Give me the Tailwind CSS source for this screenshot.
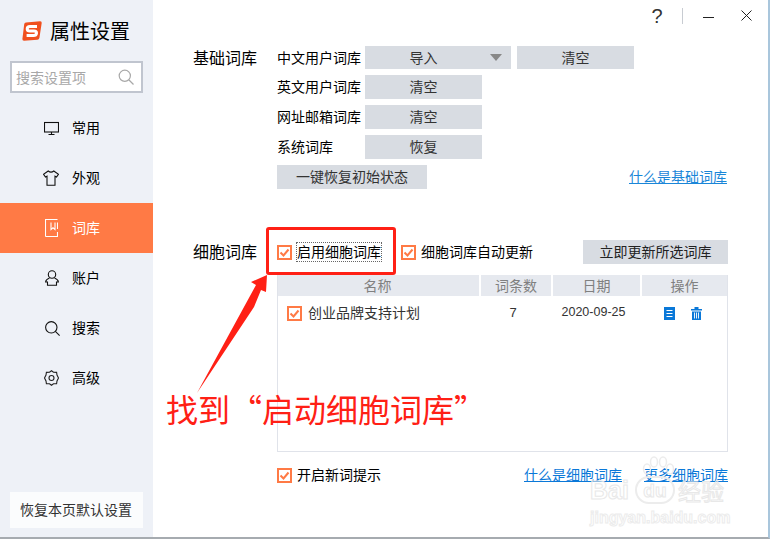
<!DOCTYPE html>
<html lang="zh-CN">
<head>
    <meta charset="UTF-8">
    <title>属性设置</title>
    <script src="https://cdn.jsdelivr.net/npm/@tailwindcss/browser@4"></script>
</head>
<body class="bg-white">
<div class="relative flex w-[770px] h-[539px] overflow-hidden bg-white border-r-2 border-b-2 border-r-[#a9c6dc] border-b-[#a6abb0] font-['Noto_Sans_CJK_SC','Liberation_Sans',sans-serif] text-sm text-black">

    <!-- sidebar -->
    <aside class="flex flex-col w-[153px] shrink-0 bg-[#eef1f7]">
        <div class="flex items-center gap-2 h-[61px] pl-[22px] pt-[1px]">
            <svg class="w-5 h-5 shrink-0" viewBox="0 0 20 20">
                <path d="M4 1.5 L18 .3 Q20 .2 19.7 2 L17.4 17 Q17 18.6 15.4 18.8 L2 19.8 Q.2 19.8 .4 18 L2.2 3.2 Q2.4 1.7 4 1.5Z" fill="#f0501e"/>
                <path d="M15 5.6 H8 Q5.2 5.6 5.2 8 Q5.2 10 8 10 H12 Q14.8 10 14.5 12.3 Q14.2 14.5 11.5 14.5 H4.6" fill="none" stroke="#fff" stroke-width="3"/>
            </svg>
            <span class="text-xl leading-none">属性设置</span>
        </div>
        <div class="flex items-center justify-between h-[32px] mx-[10px] pl-[4px] pr-[7px] bg-white border-[2px] border-[#c0c5cf]">
            <span class="text-sm text-[#a8a8a8]">搜索设置项</span>
            <svg class="w-4 h-4" viewBox="0 0 16 16" fill="none" stroke="#a8a8a8" stroke-width="1.2"><circle cx="6.8" cy="6.8" r="5.6"/><path d="M11 11l4.5 4.5"/></svg>
        </div>
        <nav class="flex flex-col mt-[10px]">
            <div class="flex items-center h-[50px] pl-[44px] gap-[13px]">
                <svg class="w-[15px] h-[15px]" viewBox="0 0 15 15" fill="none" stroke="#111" stroke-width="1.1"><rect x=".5" y="1.5" width="14" height="9.5"/><path d="M7.5 11v2.5M4.5 13.5h6"/></svg>
                <span class="pb-[2px]">常用</span>
            </div>
            <div class="flex items-center h-[50px] pl-[43px] gap-[13px]">
                <svg class="w-4 h-4" viewBox="0 0 16 16" fill="none" stroke="#111" stroke-width="1.1"><path d="M5.2 1 Q8 3.2 10.8 1 L15.5 4.2 L13.5 7 L12 6.2 V15.3 H4 V6.2 L2.5 7 L.5 4.2Z"/></svg>
                <span class="pb-[2px]">外观</span>
            </div>
            <div class="flex items-center h-[50px] pl-[45px] gap-[14px] bg-[#ff7a45] text-white">
                <svg class="w-[13px] h-[18px]" viewBox="0 0 13 18" fill="none" stroke="#fff" stroke-width="1.1"><path d="M.5 17.5V.5H12.5M.5 17.5H12.5V13M12.5 3.5V10"/><path d="M6 3.5V10.5L8 8.8 10 10.5V3.5"/></svg>
                <span class="pb-[2px]">词库</span>
            </div>
            <div class="flex items-center h-[50px] pl-[45px] gap-[13px]">
                <svg class="w-[14px] h-4" viewBox="0 0 14 16" fill="none" stroke="#111" stroke-width="1.1"><circle cx="7" cy="4.5" r="3.7"/><path d="M4.5 8 Q.8 9.5.6 12H2.5V15.3H11.5V12H13.4Q13.2 9.5 9.5 8"/></svg>
                <span class="pb-[2px]">账户</span>
            </div>
            <div class="flex items-center h-[50px] pl-[45px] gap-[12px]">
                <svg class="w-[15px] h-[15px]" viewBox="0 0 15 15" fill="none" stroke="#111" stroke-width="1.1"><circle cx="6.3" cy="6.3" r="5.7"/><path d="M10.4 10.4L14.6 14.6"/></svg>
                <span class="pb-[2px]">搜索</span>
            </div>
            <div class="flex items-center h-[50px] pl-[44px] gap-[13px]">
                <svg class="w-[15px] h-4" viewBox="0 0 15 16" fill="none" stroke="#222" stroke-width="1.1"><path d="M7.5.7L9.5 2.3 12.6 2.4 13 5 14.5 8 13 11 12.6 13.6 9.5 13.7 7.5 15.3 5.5 13.7 2.4 13.6 2 11 .5 8 2 5 2.4 2.4 5.5 2.3Z"/><circle cx="7.5" cy="8" r="2.5"/></svg>
                <span class="pb-[2px]">高级</span>
            </div>
        </nav>
        <div class="flex items-center justify-center h-[36px] mx-[10px] mt-[89px] pb-[2px] pr-[1px] bg-[#fbfcfd] text-[#333]">恢复本页默认设置</div>
    </aside>

    <!-- main -->
    <main class="flex flex-col w-[615px] shrink-0">
        <header class="flex items-start justify-end h-[46px] pt-[6px] pr-[16px] text-[#333]">
            <span class="w-4 text-center text-xl leading-[20px] font-['Liberation_Sans',sans-serif]">?</span>
            <span class="w-px h-4 ml-[17px] mt-[2px] bg-[#c8ccd2]"></span>
            <svg class="w-[11px] h-[16px] ml-[20px] mt-[1px]" viewBox="0 0 11 16" stroke="#222" stroke-width="1"><path d="M0 10.5H11"/></svg>
            <svg class="w-[11px] h-[11px] ml-[27px] mt-[4px]" viewBox="0 0 11 11" stroke="#222" stroke-width="1"><path d="M.5.5L10.5 10.5M10.5.5L.5 10.5"/></svg>
        </header>

        <section class="flex pl-[40px]">
            <h2 class="w-[84px] shrink-0 text-base leading-[23px]">基础词库</h2>
            <div class="flex flex-col gap-[6px] w-[451px]">
                <div class="flex items-center h-[23px]">
                    <span class="w-[88px] shrink-0 pb-[2px]">中文用户词库</span>
                    <button class="relative w-[146px] h-full pb-[2px] bg-[#d8dce2] text-[#333]">
                        <span class="block w-[117px] text-center">导入</span>
                        <span class="absolute right-[9px] top-[8px] w-0 h-0 border-x-[6px] border-x-transparent border-t-[7px] border-t-[#888]"></span>
                    </button>
                    <button class="w-[117px] h-full ml-[6px] pb-[2px] bg-[#d8dce2] text-[#333]">清空</button>
                </div>
                <div class="flex items-center h-6">
                    <span class="w-[88px] shrink-0 pb-[2px]">英文用户词库</span>
                    <button class="w-[117px] h-full pb-[2px] bg-[#d8dce2] text-[#333]">清空</button>
                </div>
                <div class="flex items-center h-6">
                    <span class="w-[88px] shrink-0 pb-[2px]">网址邮箱词库</span>
                    <button class="w-[117px] h-full pb-[2px] bg-[#d8dce2] text-[#333]">清空</button>
                </div>
                <div class="flex items-center h-6">
                    <span class="w-[88px] shrink-0 pb-[2px]">系统词库</span>
                    <button class="w-[117px] h-full pb-[2px] bg-[#d8dce2] text-[#333]">恢复</button>
                </div>
                <div class="flex items-center justify-between h-6">
                    <button class="w-[150px] h-full pb-[2px] bg-[#d8dce2] text-[#333]">一键恢复初始状态</button>
                    <a class="mr-[1px] pb-[2px] text-[#1a86d8] underline">什么是基础词库</a>
                </div>
            </div>
        </section>

        <section class="flex items-center h-6 mt-[51px] pl-[40px]">
            <h2 class="w-[84px] shrink-0 pb-[2px] text-base">细胞词库</h2>
            <label class="flex items-center">
                <svg class="w-[15px] h-[15px] shrink-0" viewBox="0 0 15 15" fill="none" stroke="#ff7a45"><rect x="1" y="1" width="13" height="13" stroke-width="2"/><path d="M3.5 7.5L6.5 10.5 11.5 4.5" stroke-width="2"/></svg>
                <span class="flex items-center h-5 ml-[4px] pb-[2px] border border-dotted border-[#666]">启用细胞词库</span>
            </label>
            <label class="flex items-center ml-[19px]">
                <svg class="w-[15px] h-[15px] shrink-0" viewBox="0 0 15 15" fill="none" stroke="#ff7a45"><rect x="1" y="1" width="13" height="13" stroke-width="2"/><path d="M3.5 7.5L6.5 10.5 11.5 4.5" stroke-width="2"/></svg>
                <span class="ml-[5px] pb-[2px]">细胞词库自动更新</span>
            </label>
            <button class="w-[145px] h-full ml-[50px] pb-[2px] bg-[#d8dce2] text-[#222]">立即更新所选词库</button>
        </section>

        <section class="flex flex-col w-[451px] h-[177px] mt-[11px] ml-[124px] border-x border-b border-[#e0e3ea]">
            <div class="grid grid-cols-[201px_70px_87px_1fr] gap-x-[2px] h-[21px] text-[#808080] text-center leading-[21px]">
                <div class="pr-[2px] bg-[#e6e9ef]">名称</div>
                <div class="bg-[#e6e9ef]">词条数</div>
                <div class="bg-[#e6e9ef]">日期</div>
                <div class="bg-[#e6e9ef]">操作</div>
            </div>
            <div class="grid grid-cols-[201px_70px_87px_1fr] gap-x-[2px] items-center h-[34px] text-[#333]">
                <div class="flex items-center pl-[9px]">
                    <svg class="w-[15px] h-[15px] shrink-0" viewBox="0 0 15 15" fill="none" stroke="#ff7a45"><rect x="1" y="1" width="13" height="13" stroke-width="2"/><path d="M3.5 7.5L6.5 10.5 11.5 4.5" stroke-width="2"/></svg>
                    <span class="ml-[6px] pb-[2px]">创业品牌支持计划</span>
                </div>
                <div class="pr-[6px] text-center font-['Liberation_Sans',sans-serif] text-[13px]">7</div>
                <div class="pr-[6px] text-center font-['Liberation_Sans',sans-serif] text-[12.5px]">2020-09-25</div>
                <div class="flex items-center pl-[22px] gap-[16px]">
                    <svg class="w-[11px] h-[13px]" viewBox="0 0 11 13"><rect width="11" height="13" fill="#0a78d8"/><path d="M2.5 3.5H8.5M2.5 6.5H8.5M2.5 9.5H8.5" stroke="#fff"/></svg>
                    <svg class="w-[11px] h-[13px]" viewBox="0 0 11 13" fill="#0a78d8"><path d="M0 2H3.5V0H7.5V2H11V3.5H0ZM1 4.5H10V13H1Z"/><path d="M3.5 5.5V11.5M5.5 5.5V11.5M7.5 5.5V11.5" stroke="#fff" stroke-width=".9"/></svg>
                </div>
            </div>
        </section>

        <section class="flex items-center w-[451px] h-5 mt-[13px] ml-[124px]">
            <svg class="w-[15px] h-[15px] shrink-0" viewBox="0 0 15 15" fill="none" stroke="#ff7a45"><rect x="1" y="1" width="13" height="13" stroke-width="2"/><path d="M3.5 7.5L6.5 10.5 11.5 4.5" stroke-width="2"/></svg>
            <span class="ml-[5px] pb-[2px]">开启新词提示</span>
            <a class="ml-auto pb-[2px] text-[#0a78d8] underline">什么是细胞词库</a>
            <a class="ml-[22px] pb-[2px] text-[#0a78d8] underline">更多细胞词库</a>
        </section>
    </main>

    <!-- annotation on top of the screenshot -->
    <div class="absolute left-[266px] top-[227px] w-[130px] h-[48px] border-[3px] border-[#ff2015] rounded-[3px]"></div>
    <svg class="absolute left-0 top-0 w-[770px] h-[539px] pointer-events-none" viewBox="0 0 770 539">
        <polygon points="197,393 256,285 251,282 267,275 266,292 261,290 254,307" fill="#ff2015"/>
    </svg>
    <div class="absolute left-[166px] top-[386px] text-[32px] leading-[44px] text-[#ff2015] whitespace-nowrap">找到“启动细胞词库”</div>

    <!-- baidu watermark -->
    <div class="absolute left-[590px] top-[456px] flex flex-col w-[140px] pointer-events-none">
        <svg class="ml-[52px] w-[32px] h-[20px]" viewBox="0 0 32 20" fill="none" stroke="#ececec" stroke-width="1.5"><ellipse cx="5" cy="13" rx="3.5" ry="5"/><ellipse cx="12" cy="6" rx="3.5" ry="5"/><ellipse cx="21" cy="6" rx="3.5" ry="5"/><ellipse cx="28" cy="13" rx="3.5" ry="5"/></svg>
        <div class="flex items-center h-[28px] font-['Liberation_Sans',sans-serif] font-bold leading-none text-transparent [-webkit-text-stroke:1px_#e8e8e8]">
            <span class="text-[25px]">Bai</span>
            <span class="flex items-center justify-center w-[40px] h-[28px] ml-[6px] rounded-full border-2 border-[#ececec] text-[19px]">du</span>
            <span class="ml-[3px] font-['Noto_Sans_CJK_SC',sans-serif] text-[23px] font-normal">经验</span>
        </div>
        <div class="mt-[4px] font-['Liberation_Sans',sans-serif] text-[16px] font-bold leading-[20px] whitespace-nowrap text-transparent [-webkit-text-stroke:1px_#ececec]">jingyan.baidu.com</div>
    </div>
</div>
</body>
</html>
